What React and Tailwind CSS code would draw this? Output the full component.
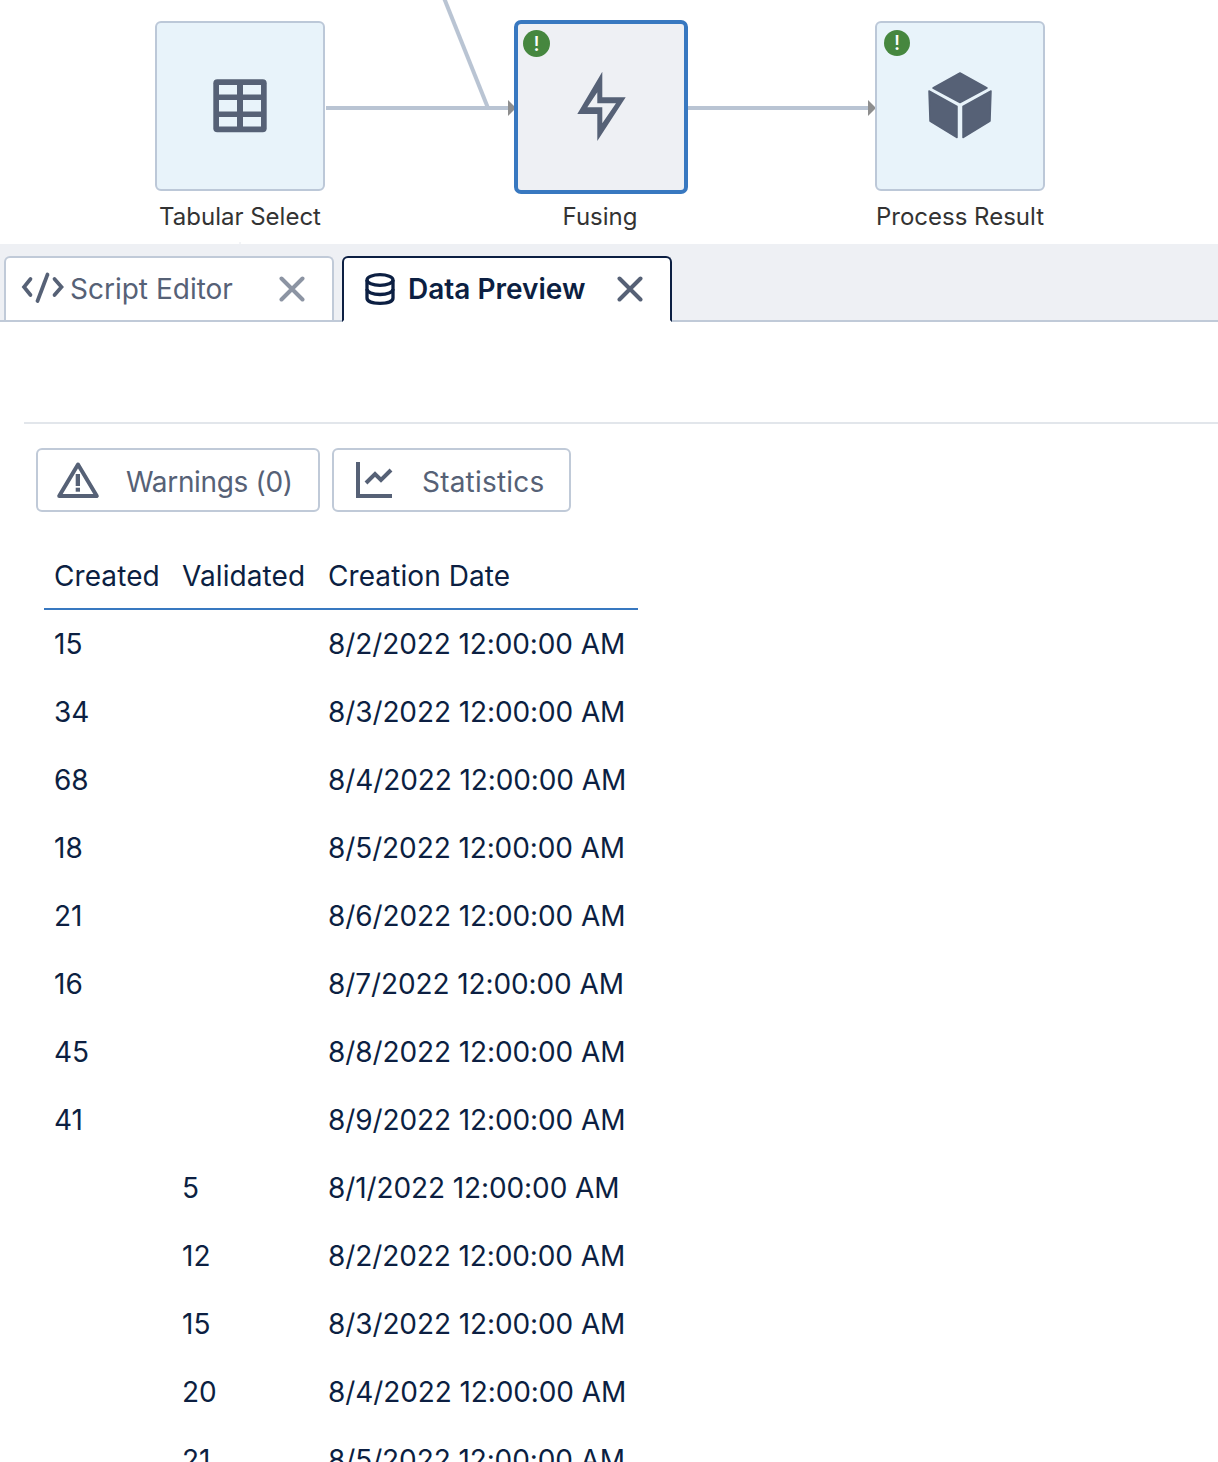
import React from "react";

const Badge = ({ selected }) => (
  <div className={selected
    ? "absolute left-[5px] top-[6px] w-[27px] h-[27px] rounded-full bg-[#46873f] text-white flex items-center justify-center text-[20px] font-medium leading-none"
    : "absolute left-[7px] top-[7px] w-[26px] h-[26px] rounded-full bg-[#46873f] text-white flex items-center justify-center text-[20px] font-medium leading-none"}>!</div>
);

const GridIcon = () => (
  <svg width="54" height="54" viewBox="0 0 54 54">
    <rect x="0.300" y="0.300" width="53.400" height="53" rx="4" fill="#566176" />
    <g fill="#e8f3fa">
      <rect x="6" y="6" width="18" height="9.500" />
      <rect x="30" y="6" width="18" height="9.500" />
      <rect x="6" y="21" width="18" height="11.500" />
      <rect x="30" y="21" width="18" height="11.500" />
      <rect x="6" y="38" width="18" height="9.500" />
      <rect x="30" y="38" width="18" height="9.500" />
    </g>
  </svg>
);

const BoltIcon = () => (
  <svg width="50" height="70" viewBox="0 0 50 70" className="overflow-visible">
    <path
      fillRule="evenodd"
      fill="#566176"
      d="M26.300 -0.300 L1.300 42 H21.300 V69 L49.700 25.300 H26.300 Z M21.300 20.300 L11.300 35.300 H26.300 V51.300 L40 31.300 H21.300 Z"
    />
  </svg>
);

const CubeIcon = () => (
  <svg width="66" height="70" viewBox="0 0 66 70">
    <g fill="#566176" stroke="#566176" strokeWidth="1.500" strokeLinejoin="round">
      <path d="M33 2 L60 17 L33 31.500 L6 17 Z" />
      <path d="M2 20 L30 35.500 V66.500 L3 50 Z" />
      <path d="M64 20 L36 35.500 V66.500 L63 50 Z" />
    </g>
  </svg>
);

const Node = ({ x, label, selected, badge, children }) => (
  <div className="absolute top-0 w-[170px]" style={{ left: x }}>
    <div className={selected
      ? "absolute left-[-1px] top-[20px] w-[174px] h-[174px] rounded-[7px] border-[4px] border-[#3878c0] bg-[#eef0f4] flex items-center justify-center"
      : "absolute left-0 top-[21px] w-[170px] h-[170px] rounded-[6px] border-2 border-[#bcc8d8] bg-[#e8f3fa] flex items-center justify-center"}>
      {badge && <Badge selected={selected} />}
      {children}
    </div>
    <div className="absolute left-[-20px] w-[210px] top-[202px] text-center text-[24px] leading-[30px] text-[#333333] whitespace-nowrap">{label}</div>
  </div>
);

const Connectors = () => (
  <svg className="absolute left-0 top-0" width="1218" height="244">
    <g stroke="#b9c4d3" strokeWidth="4" fill="none">
      <path d="M326 108 H510" />
      <path d="M444 -2 L488 108" />
      <path d="M688 108 H870" />
    </g>
    <path d="M508 100 L516 108 L508 116 Z" fill="#8e8e8e" />
    <path d="M868 100 L876 108 L868 116 Z" fill="#8e8e8e" />
    <path d="M240 242 V244" stroke="#e6e9ee" strokeWidth="1" />
  </svg>
);

const CloseIcon = ({ color }) => (
  <svg width="26" height="26" viewBox="0 0 26 26">
    <path d="M2.500 2.500 L23.500 23.500 M23.500 2.500 L2.500 23.500" stroke={color} strokeWidth="4" strokeLinecap="round" fill="none" />
  </svg>
);

const CodeIcon = () => (
  <svg width="42" height="30" viewBox="0 0 42 30" className="overflow-visible -mt-[2px]">
    <g stroke="#566176" strokeWidth="3.700" fill="none" strokeLinecap="round">
      <path d="M8.500 6 L2 14 L8.500 22" />
      <path d="M32.500 6 L39.500 14 L32.500 22" />
      <path d="M25.500 1.500 L15.500 28" />
    </g>
  </svg>
);

const DbIcon = () => (
  <svg width="30" height="32" viewBox="0 0 30 32">
    <g stroke="#0c1f42" strokeWidth="3.300" fill="none">
      <ellipse cx="15" cy="7" rx="13" ry="5.300" />
      <path d="M2 7 V25 C2 28.500 8 30.300 15 30.300 C22 30.300 28 28.500 28 25 V7" />
      <path d="M2 16 C2 19.500 8 21.500 15 21.500 C22 21.500 28 19.500 28 16" />
    </g>
  </svg>
);

const WarnIcon = () => (
  <svg width="44" height="38" viewBox="0 0 44 38">
    <path d="M22 3.500 L40.800 35 H3.200 Z" fill="none" stroke="#566176" strokeWidth="4" strokeLinejoin="round" />
    <rect x="19.700" y="13" width="4.300" height="12" fill="#566176" />
    <rect x="19.700" y="26.700" width="4.300" height="4" fill="#566176" />
  </svg>
);

const ChartIcon = () => (
  <svg width="38" height="36" viewBox="0 0 38 36">
    <path d="M3 0 V34 H37" fill="none" stroke="#566176" strokeWidth="4" />
    <path d="M11 21 L20 12 L26 18 L36 8" fill="none" stroke="#566176" strokeWidth="4" />
  </svg>
);

const rows = [
  ["15", "", "8/2/2022 12:00:00 AM"],
  ["34", "", "8/3/2022 12:00:00 AM"],
  ["68", "", "8/4/2022 12:00:00 AM"],
  ["18", "", "8/5/2022 12:00:00 AM"],
  ["21", "", "8/6/2022 12:00:00 AM"],
  ["16", "", "8/7/2022 12:00:00 AM"],
  ["45", "", "8/8/2022 12:00:00 AM"],
  ["41", "", "8/9/2022 12:00:00 AM"],
  ["", "5", "8/1/2022 12:00:00 AM"],
  ["", "12", "8/2/2022 12:00:00 AM"],
  ["", "15", "8/3/2022 12:00:00 AM"],
  ["", "20", "8/4/2022 12:00:00 AM"],
  ["", "21", "8/5/2022 12:00:00 AM"],
];

const Row = ({ r }) => (
  <div className="grid grid-cols-[128px_146px_320px] h-[68px] items-center text-[28px] text-[#0c1f42]">
    <div className="pl-[10px]">{r[0]}</div>
    <div className="pl-[10px]">{r[1]}</div>
    <div className="pl-[10px] whitespace-nowrap tracking-[-0.1px]">{r[2]}</div>
  </div>
);

export default function App() {
  return (
    <div className="w-[1218px] h-[1462px] overflow-hidden bg-white font-['Inter',sans-serif]">
      <div className="relative h-[244px]">
        <Connectors />
        <Node x={155} label="Tabular Select"><GridIcon /></Node>
        <Node x={515} label="Fusing" selected badge><BoltIcon /></Node>
        <Node x={875} label="Process Result" badge><CubeIcon /></Node>
      </div>

      <div className="h-[78px] bg-[#eef0f4] border-b-2 border-[#c0cad8] flex items-end pl-[4px] gap-[8px]">
        <div className="w-[330px] h-[64px] bg-white border-2 border-b-0 border-[#c0cad8] rounded-t-[6px] flex items-center pl-[16px] text-[28px] text-[#566176]">
          <CodeIcon />
          <span className="ml-[6px]">Script Editor</span>
          <span className="ml-[46px] flex"><CloseIcon color="#8c94a3" /></span>
        </div>
        <div className="w-[330px] h-[66px] -mb-[2px] bg-white border-2 border-[#0c1f42] border-b-white rounded-t-[6px] flex items-center pl-[21px] text-[28px] font-semibold text-[#0c1f42]">
          <DbIcon />
          <span className="ml-[13px]">Data Preview</span>
          <span className="ml-[32px] flex"><CloseIcon color="#566176" /></span>
        </div>
      </div>

      <div className="pl-[24px] pt-[100px]">
        <div className="border-t-2 border-[#e2e6eb]" />
      </div>

      <div className="flex gap-[12px] pl-[36px] mt-[24px]">
        <div className="w-[284px] h-[64px] border-2 border-[#c0cad8] rounded-[6px] flex items-center pl-[18px] text-[28px] text-[#566176]">
          <WarnIcon />
          <span className="ml-[26px] pt-[4px] tracking-[-0.33px]">Warnings (0)</span>
        </div>
        <div className="w-[239px] h-[64px] border-2 border-[#c0cad8] rounded-[6px] flex items-center pl-[21px] text-[28px] text-[#566176]">
          <ChartIcon />
          <span className="ml-[29px] pt-[4px] tracking-[0.2px]">Statistics</span>
        </div>
      </div>

      <div className="ml-[44px] w-[594px] mt-[30px]">
        <div className="grid grid-cols-[128px_146px_320px] h-[68px] items-center pt-[2px] border-b-2 border-[#3878c0] text-[28px] tracking-[0.08px] text-[#0c1f42]">
          <div className="pl-[10px]">Created</div>
          <div className="pl-[10px]">Validated</div>
          <div className="pl-[10px]">Creation Date</div>
        </div>
        {rows.map((r, i) => <Row key={i} r={r} />)}
      </div>
    </div>
  );
}
